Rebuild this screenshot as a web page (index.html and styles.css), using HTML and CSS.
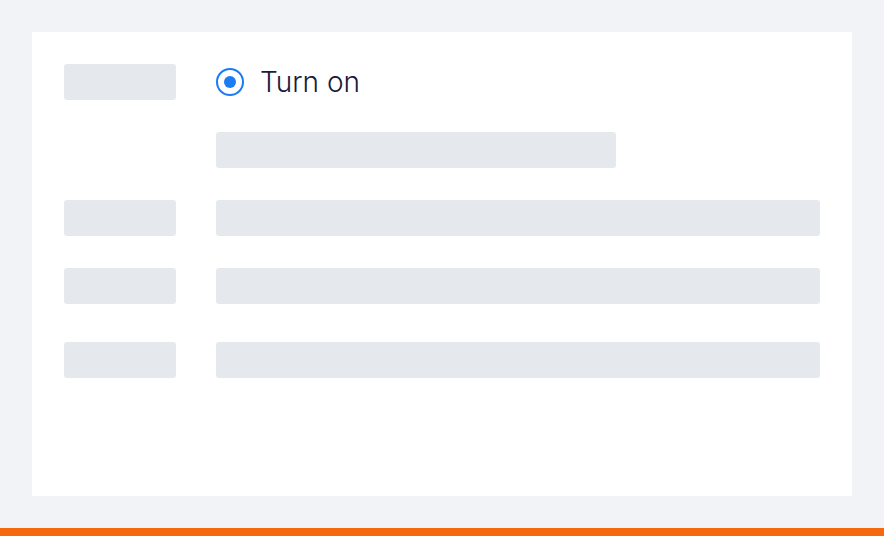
FILE: index.html
```html
<!DOCTYPE html>
<html>
<head>
<meta charset="utf-8">
<link rel="stylesheet" href="styles.css">
</head>
<body>
<div class="page">
  <div class="card">
    <div class="row">
      <div class="sk label"></div>
      <label class="radio">
        <span class="radio-dot"></span>
        <span class="radio-text">Turn on</span>
      </label>
    </div>
    <div class="row">
      <div class="label-space"></div>
      <div class="sk half"></div>
    </div>
    <div class="row">
      <div class="sk label"></div>
      <div class="sk full"></div>
    </div>
    <div class="row">
      <div class="sk label"></div>
      <div class="sk full"></div>
    </div>
    <div class="row last">
      <div class="sk label"></div>
      <div class="sk full"></div>
    </div>
  </div>
  <div class="footer-bar"></div>
</div>
</body>
</html>
```
FILE: styles.css
```css
html, body {
  margin: 0;
  padding: 0;
  background: #f2f3f7;
  font-family: Inter, "Noto Sans", sans-serif;
}
.page {
  width: 884px;
  height: 536px;
  display: flex;
  flex-direction: column;
  padding-top: 32px;
  box-sizing: border-box;
}
.card {
  margin: 0 32px;
  height: 464px;
  background: #ffffff;
  padding: 32px;
  box-sizing: border-box;
  display: flex;
  flex-direction: column;
  gap: 32px;
}
.row {
  display: flex;
  align-items: center;
  gap: 40px;
  height: 36px;
}
.row.last {
  margin-top: 6px;
}
.sk {
  background: #e5e8ed;
  border-radius: 3px;
  height: 36px;
}
.label { width: 112px; flex: none; }
.label-space { width: 112px; flex: none; }
.half { width: 400px; }
.full { flex: 1; }
.radio {
  display: flex;
  align-items: center;
  gap: 16px;
}
.radio-dot {
  width: 28px;
  height: 28px;
  box-sizing: border-box;
  border: 2.5px solid #1b7cf4;
  border-radius: 50%;
  display: flex;
  align-items: center;
  justify-content: center;
}
.radio-dot::after {
  content: "";
  width: 12px;
  height: 12px;
  border-radius: 50%;
  background: #1b7cf4;
}
.radio-text {
  font-size: 28px;
  font-weight: 300;
  color: #1a1c3a;
  line-height: 36px;
  margin-top: -1px;
}
.footer-bar {
  margin-top: auto;
  height: 8px;
  background: #f5680e;
}
```
